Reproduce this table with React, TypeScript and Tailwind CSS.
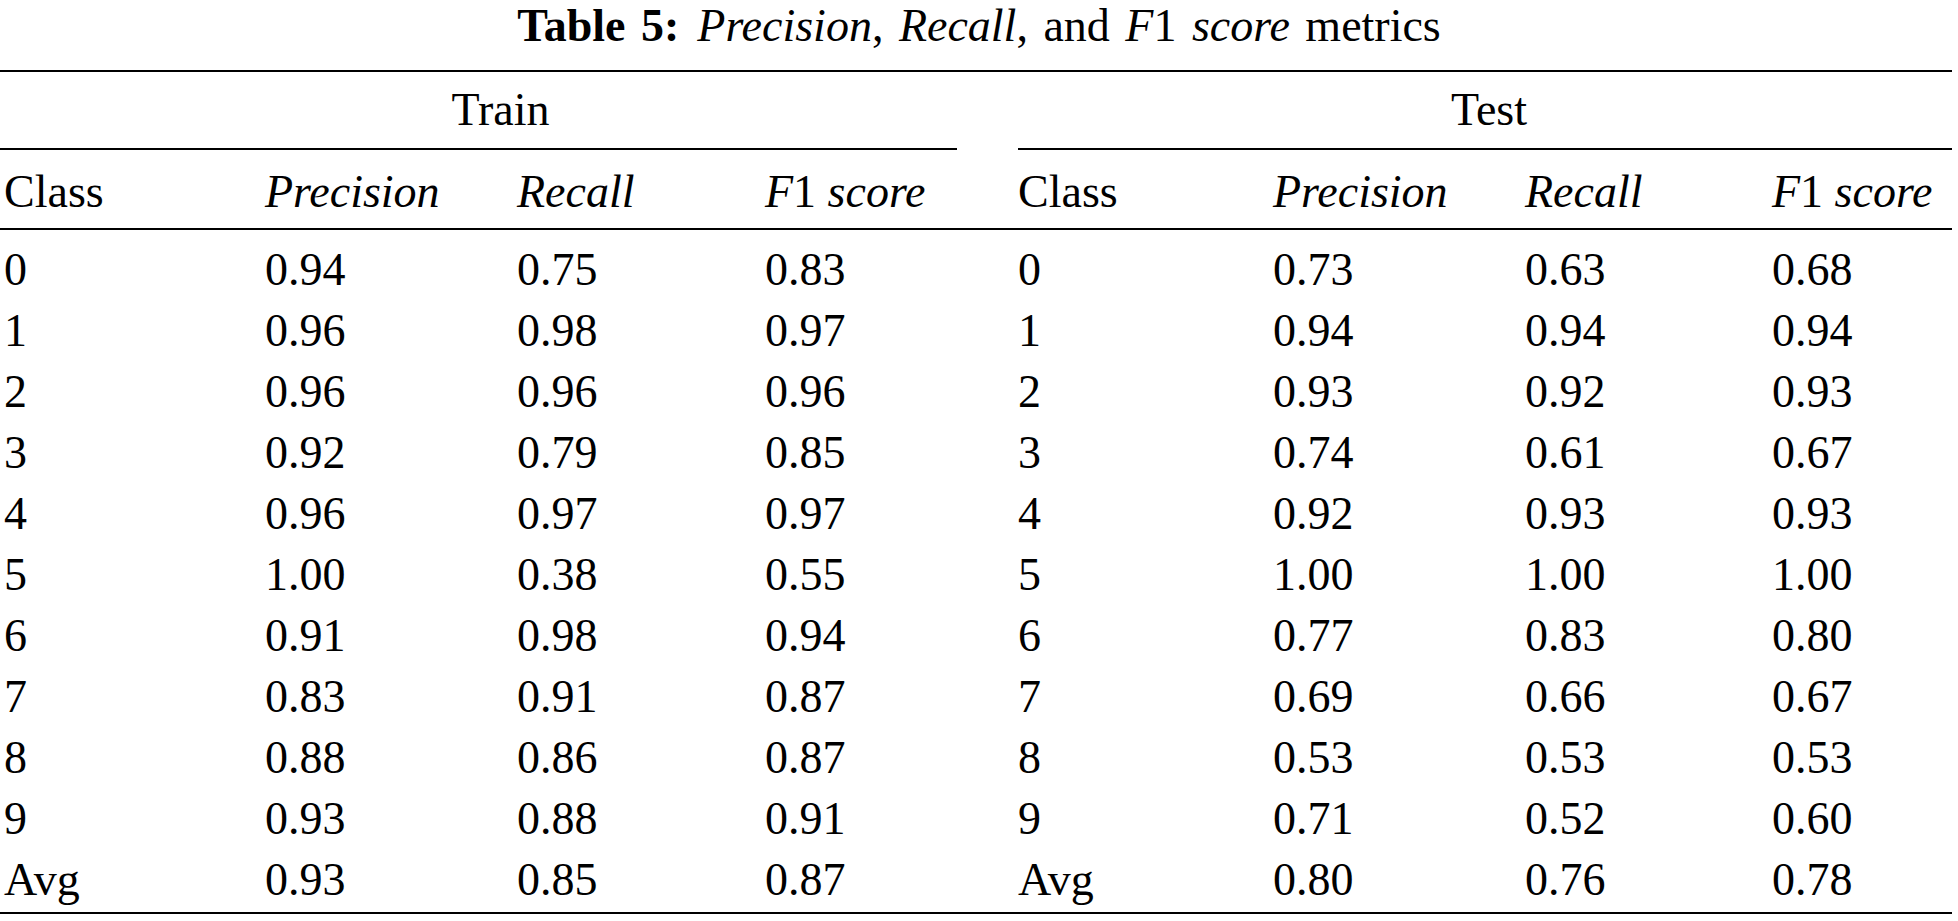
import React from "react";

type Row = [string, string, string, string, string, string, string];

const rows: Row[] = [
  ["0", "0.94", "0.75", "0.83", "0.73", "0.63", "0.68"],
  ["1", "0.96", "0.98", "0.97", "0.94", "0.94", "0.94"],
  ["2", "0.96", "0.96", "0.96", "0.93", "0.92", "0.93"],
  ["3", "0.92", "0.79", "0.85", "0.74", "0.61", "0.67"],
  ["4", "0.96", "0.97", "0.97", "0.92", "0.93", "0.93"],
  ["5", "1.00", "0.38", "0.55", "1.00", "1.00", "1.00"],
  ["6", "0.91", "0.98", "0.94", "0.77", "0.83", "0.80"],
  ["7", "0.83", "0.91", "0.87", "0.69", "0.66", "0.67"],
  ["8", "0.88", "0.86", "0.87", "0.53", "0.53", "0.53"],
  ["9", "0.93", "0.88", "0.91", "0.71", "0.52", "0.60"],
  ["Avg", "0.93", "0.85", "0.87", "0.80", "0.76", "0.78"],
];

// column starts: 0, 265, 517, 765, 1018, 1273, 1525, 1772 -> 1952
const cols = "grid grid-cols-[265px_252px_248px_253px_255px_252px_247px_180px]";

function F1Score() {
  return (
    <>
      <i>F</i>1 <i>score</i>
    </>
  );
}

export default function App() {
  return (
    <div className="w-[1958px] bg-white text-black font-['Liberation_Serif','Times_New_Roman',serif] text-[46px]">
      {/* caption */}
      <div className="h-[70px] pt-[3px] leading-[46px] text-center whitespace-nowrap [word-spacing:4px]">
        <b>Table 5:</b>
        <span className="ml-[18px]"><i>Precision</i>, <i>Recall</i>, and <F1Score /> metrics</span>
      </div>

      <div className="w-[1952px]">
        <div className="h-[2px] bg-black" />

        {/* group heads */}
        <div className="flex pt-[7px] pb-[8px] leading-[61px]">
          <div className="w-[957px] pl-[44px] text-center">Train</div>
          <div className="w-[61px]" />
          <div className="w-[934px] pl-[8px] text-center">Test</div>
        </div>
        <div className="flex h-[2px]">
          <div className="w-[957px] bg-black" />
          <div className="w-[61px]" />
          <div className="flex-1 bg-black" />
        </div>

        {/* column heads */}
        <div className={`${cols} pt-[11px] pb-[6px] leading-[61px] whitespace-nowrap`}>
          <div className="pl-[4px]">Class</div>
          <div><i>Precision</i></div>
          <div><i>Recall</i></div>
          <div><F1Score /></div>
          <div>Class</div>
          <div><i>Precision</i></div>
          <div><i>Recall</i></div>
          <div><F1Score /></div>
        </div>
        <div className="h-[2px] bg-black" />

        {/* body */}
        <div className="pt-[9px] pb-[2px]">
          {rows.map((r) => (
            <div key={r[0]} className={`${cols} leading-[61px]`}>
              <div className="pl-[4px]">{r[0]}</div>
              <div>{r[1]}</div>
              <div>{r[2]}</div>
              <div>{r[3]}</div>
              <div>{r[0]}</div>
              <div>{r[4]}</div>
              <div>{r[5]}</div>
              <div>{r[6]}</div>
            </div>
          ))}
        </div>
        <div className="h-[2px] bg-black" />
      </div>
    </div>
  );
}
